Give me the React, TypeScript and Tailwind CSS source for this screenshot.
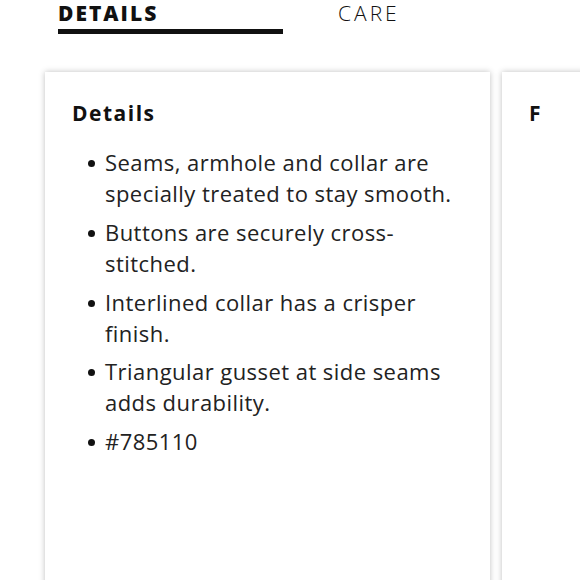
import React from "react";

const items = [
  "Seams, armhole and collar are specially treated to stay smooth.",
  "Buttons are securely cross-stitched.",
  "Interlined collar has a crisper finish.",
  "Triangular gusset at side seams adds durability.",
  "#785110",
];

export default function App() {
  return (
    <div
      className="w-[580px] h-[580px] overflow-hidden bg-white text-[#222]"
      style={{ fontFamily: "'Open Sans', Lato, sans-serif" }}
    >
      <div className="flex pl-[58px] h-[34px]">
        <div className="w-[225px] border-b-[5px] border-[#111] flex items-start">
          <span className="text-[21px] leading-[26px] font-extrabold tracking-[2px] text-[#111]">
            DETAILS
          </span>
        </div>
        <div className="pl-[55px]">
          <span className="text-[21px] leading-[26px] font-light tracking-[3px] text-[#111]">
            CARE
          </span>
        </div>
      </div>
      <div className="flex gap-[12px] pl-[45px] pt-[38px]">
        <div className="w-[445px] h-[520px] shrink-0 bg-white shadow-[0_0_6px_rgba(0,0,0,0.25)] pl-[27px] pr-[28px] pt-[28px]">
          <h2 className="text-[21px] leading-[26px] font-bold tracking-[1.5px] text-[#111]">
            Details
          </h2>
          <ul className="mt-[21px] flex flex-col gap-[7.8px]">
            {items.map((t) => (
              <li key={t} className="flex text-[22px] leading-[31px] tracking-[0.45px]">
                <span className="w-[33px] shrink-0 pl-[16px] pt-[13px]">
                  <span className="block w-[7px] h-[7px] rounded-full bg-[#111]" />
                </span>
                <span className="flex-1">{t}</span>
              </li>
            ))}
          </ul>
        </div>
        <div className="w-[445px] h-[520px] shrink-0 bg-white shadow-[0_0_6px_rgba(0,0,0,0.25)] pl-[27px] pt-[28px]">
          <h2 className="text-[21px] leading-[26px] font-bold tracking-[1.5px] text-[#111]">
            F
          </h2>
        </div>
      </div>
    </div>
  );
}
